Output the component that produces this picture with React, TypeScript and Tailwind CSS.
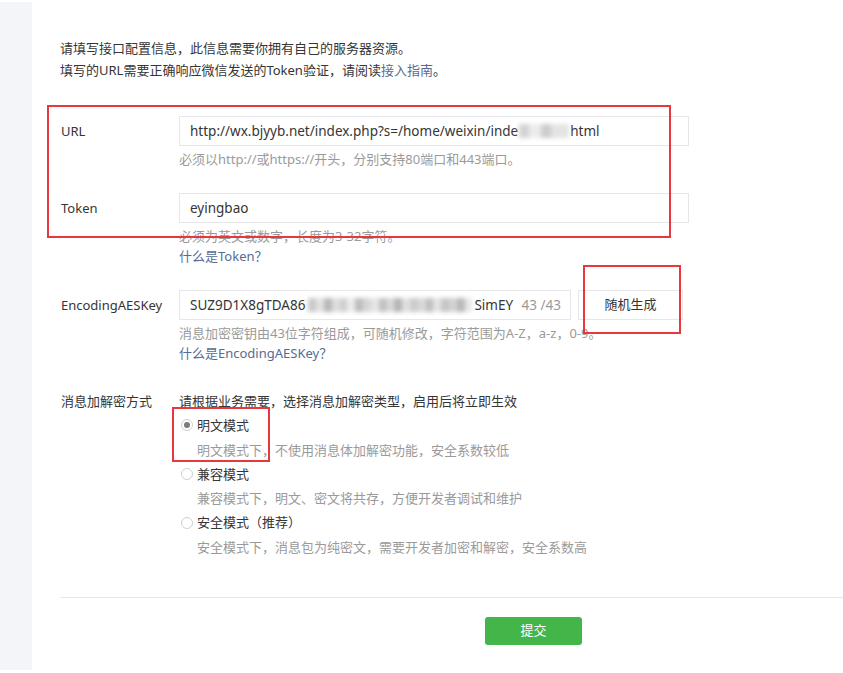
import React from "react";

function Radio({ checked, label }: { checked?: boolean; label: string }) {
  return (
    <div className="flex items-center">
      <span className="ml-[2px] mr-[4px] flex h-[12px] w-[12px] items-center justify-center rounded-full border border-[#cfd0d3] bg-white">
        {checked && <span className="h-[6px] w-[6px] rounded-full bg-[#7b7b7b]" />}
      </span>
      <span>{label}</span>
    </div>
  );
}

const mosaic = [
  "#c9c9c9", "#e2e2e2", "#b8b8b8", "#dedede", "#cfcfcf", "#ececec", "#bdbdbd", "#d6d6d6",
  "#e6e6e6", "#c2c2c2", "#dadada", "#b5b5b5", "#e0e0e0", "#cccccc", "#d9d9d9", "#bfbfbf",
  "#e4e4e4", "#c6c6c6", "#d2d2d2", "#b9b9b9", "#e8e8e8",
];

export default function App() {
  return (
    <div className="relative flex h-[673px] w-[843px] overflow-hidden bg-white font-['Noto_Sans','Noto_Sans_CJK_SC',sans-serif] text-[13px] text-[#353535]">
      <div className="mb-[3px] mt-[2px] w-[32px] shrink-0 bg-[#f4f5f9]" />
      <div className="flex flex-1 flex-col pt-[37px]">
        <div className="pl-[28px] leading-[22px]">
          <p>请填写接口配置信息，此信息需要你拥有自己的服务器资源。</p>
          <p>
            填写的URL需要正确响应微信发送的Token验证，请阅读
            <span className="text-[#576b95]">接入指南</span>。
          </p>
        </div>

        <div className="mt-[35px] flex flex-col gap-[24px] pl-[28px]">
          {/* URL */}
          <div className="grid grid-cols-[119px_1fr]">
            <div className="pl-[1px] leading-[30px]">URL</div>
            <div>
              <div className="flex h-[30px] w-[510px] items-center border border-[#e7e7eb] bg-white px-[10px] text-[13.5px] whitespace-nowrap">
                <span>http://wx.bjyyb.net/index.php?s=/home/weixin/inde</span>
                <span className="mx-[1px] flex h-[14px] w-[50px] blur-[2px]">
                  <span className="w-[10px] bg-[#d4d4d4]" />
                  <span className="w-[12px] bg-[#ececec]" />
                  <span className="w-[10px] bg-[#cdcdcd]" />
                  <span className="w-[18px] bg-[#e4e4e4]" />
                </span>
                <span>html</span>
              </div>
              <p className="mt-[3px] leading-[20px] text-[#9a9a9a]">必须以http://或https://开头，分别支持80端口和443端口。</p>
            </div>
          </div>

          {/* Token */}
          <div className="grid grid-cols-[119px_1fr]">
            <div className="pl-[1px] leading-[30px]">Token</div>
            <div>
              <div className="flex h-[30px] w-[510px] items-center border border-[#e7e7eb] bg-white px-[10px] text-[13.5px]">
                eyingbao
              </div>
              <p className="mt-[3px] leading-[20px] text-[#9a9a9a]">必须为英文或数字，长度为3-32字符。</p>
              <p className="leading-[20px] text-[#576b95]">什么是Token？</p>
            </div>
          </div>

          {/* EncodingAESKey */}
          <div className="grid grid-cols-[119px_1fr]">
            <div className="pl-[1px] leading-[30px]">EncodingAESKey</div>
            <div>
              <div className="flex items-center gap-[7px]">
                <div className="flex h-[30px] w-[392px] items-center border border-[#e7e7eb] bg-white pl-[10px] pr-[9px] text-[13.5px] whitespace-nowrap">
                  <span>SUZ9D1X8gTDA86</span>
                  <span className="ml-[3px] flex h-[14px] w-[164px] blur-[2px]">
                    {mosaic.map((c, i) => (
                      <span key={i} className="h-full flex-1" style={{ backgroundColor: c }} />
                    ))}
                  </span>
                  <span className="ml-[2px]">SimEY</span>
                  <span className="ml-auto text-[#9a9a9a]">43 /43</span>
                </div>
                <div className="flex h-[30px] w-[105px] items-center justify-center border border-[#e7e7eb] bg-white">
                  随机生成
                </div>
              </div>
              <p className="mt-[3px] leading-[20px] text-[#9a9a9a]">消息加密密钥由43位字符组成，可随机修改，字符范围为A-Z，a-z，0-9。</p>
              <p className="leading-[20px] text-[#576b95]">什么是EncodingAESKey？</p>
            </div>
          </div>
        </div>

        {/* mode */}
        <div className="mt-[26px] grid grid-cols-[119px_1fr] pl-[28px] leading-[24.3px]">
          <div className="pl-[1px]">消息加解密方式</div>
          <div>
            <p>请根据业务需要，选择消息加解密类型，启用后将立即生效</p>
            <Radio checked label="明文模式" />
            <p className="pl-[18px] text-[#9a9a9a]">明文模式下，不使用消息体加解密功能，安全系数较低</p>
            <Radio label="兼容模式" />
            <p className="pl-[18px] text-[#9a9a9a]">兼容模式下，明文、密文将共存，方便开发者调试和维护</p>
            <Radio label="安全模式（推荐）" />
            <p className="pl-[18px] text-[#9a9a9a]">安全模式下，消息包为纯密文，需要开发者加密和解密，安全系数高</p>
          </div>
        </div>

        <div className="ml-[28px] mt-[38px] border-t border-[#e7e7eb]" />
        <div className="ml-[453px] mt-[19px] flex h-[28px] w-[97px] items-center justify-center rounded-[3px] bg-[#44b549] text-white">
          提交
        </div>
      </div>

      {/* annotation boxes */}
      <div className="pointer-events-none absolute left-[47px] top-[105px] h-[133px] w-[624px] border-[2px] border-[#e8373d]" />
      <div className="pointer-events-none absolute left-[583px] top-[265px] h-[69px] w-[98px] border-[2px] border-[#e8373d]" />
      <div className="pointer-events-none absolute left-[172px] top-[407px] h-[55px] w-[98px] border-[2px] border-[#e8373d]" />
    </div>
  );
}
